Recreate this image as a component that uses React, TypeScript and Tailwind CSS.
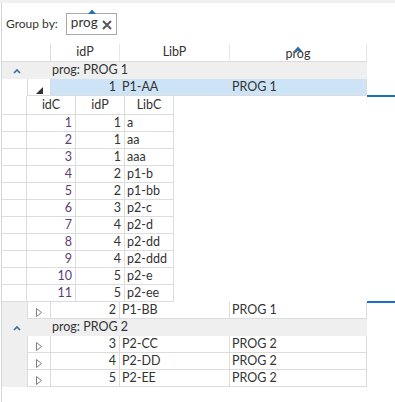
import React from "react";

const parents1 = [
  { id: 1, lib: "P1-AA", prog: "PROG 1", open: true },
  { id: 2, lib: "P1-BB", prog: "PROG 1", open: false },
];
const parents2 = [
  { id: 3, lib: "P2-CC", prog: "PROG 2" },
  { id: 4, lib: "P2-DD", prog: "PROG 2" },
  { id: 5, lib: "P2-EE", prog: "PROG 2" },
];
const children: [number, number, string][] = [
  [1, 1, "a"],
  [2, 1, "aa"],
  [3, 1, "aaa"],
  [4, 2, "p1-b"],
  [5, 2, "p1-bb"],
  [6, 3, "p2-c"],
  [7, 4, "p2-d"],
  [8, 4, "p2-dd"],
  [9, 4, "p2-ddd"],
  [10, 5, "p2-e"],
  [11, 5, "p2-ee"],
];

function SortUp({ className }: { className?: string }) {
  return (
    <svg width="8" height="5" viewBox="0 0 8 5" className={className}>
      <polygon points="0,5 4,0.5 8,5" fill="#2d6db4" />
    </svg>
  );
}

function Chevron() {
  return (
    <svg width="8" height="6" viewBox="0 0 8 6">
      <polyline points="1,5 4,2 7,5" fill="none" stroke="#3c6ea8" strokeWidth="1.7" />
    </svg>
  );
}

function CollapsedArrow() {
  return (
    <svg width="6" height="9" viewBox="0 0 6 9">
      <polygon points="0.5,0.5 5.5,4.5 0.5,8.5" fill="white" stroke="#808080" strokeWidth="1" />
    </svg>
  );
}

function ExpandedArrow() {
  return (
    <svg width="7" height="7" viewBox="0 0 7 7">
      <polygon points="7,0 7,7 0,7" fill="#333" />
    </svg>
  );
}

function GroupRow({ label }: { label: string }) {
  return (
    <div className="flex h-[17px] w-[365px] items-center bg-[#efefef]">
      <div className="flex w-[25px] justify-center pl-[4px] pt-[1px]">
        <Chevron />
      </div>
      <div className="pl-[25px] leading-none">{label}</div>
    </div>
  );
}

function ParentRow({
  id,
  lib,
  prog,
  selected,
}: {
  id: number;
  lib: string;
  prog: string;
  selected?: boolean;
}) {
  return (
    <div className="flex h-[17px]">
      <div className={`w-[25px] ${selected ? "bg-white" : "bg-[#efefef]"}`} />
      <div className="flex w-[24px] items-end justify-center border-x border-b border-[#dcdcdc] pb-[1px]">
        {selected ? <ExpandedArrow /> : <CollapsedArrow />}
      </div>
      <div
        className={`flex w-[69px] items-center justify-end border-r border-b border-[#dcdcdc] pr-[3px] ${
          selected ? "bg-[#cde4f7] border-r-[#cde4f7]" : ""
        }`}
      >
        {id}
      </div>
      <div
        className={`flex w-[110px] items-center border-r border-b border-[#dcdcdc] pl-[2px] ${
          selected ? "bg-[#cde4f7] border-r-[#cde4f7]" : ""
        }`}
      >
        {lib}
      </div>
      <div
        className={`flex w-[137px] items-center border-r border-b border-[#dcdcdc] pl-[2px] ${
          selected ? "bg-[#cde4f7]" : ""
        }`}
      >
        {prog}
      </div>
      {selected && (
        <div className="flex flex-1 items-end">
          <div className="h-[2px] w-full translate-y-px bg-[#1b6fc4]" />
        </div>
      )}
    </div>
  );
}

function Detail() {
  return (
    <div className="flex">
      <div className="w-[172px] border-r border-[#dcdcdc]">
        <div className="flex h-[19px] border-b border-[#dcdcdc]">
          <div className="w-[25px] border-r border-[#dcdcdc]" />
          <div className="flex w-[49px] items-center justify-center border-r border-[#dcdcdc]">idC</div>
          <div className="flex w-[49px] items-center justify-center border-r border-[#dcdcdc]">idP</div>
          <div className="flex w-[48px] items-center justify-center">LibC</div>
        </div>
        {children.map(([c, p, l]) => (
          <div key={c} className="flex h-[17px] border-b border-[#dcdcdc]">
            <div className="w-[25px] border-r border-[#dcdcdc]" />
            <div className="flex w-[49px] items-center justify-end border-r border-[#dcdcdc] pr-[3px] text-[#5b3b78]">
              {c}
            </div>
            <div className="flex w-[49px] items-center justify-end border-r border-[#dcdcdc] pr-[3px]">{p}</div>
            <div className="flex w-[48px] items-center pl-[2px]">{l}</div>
          </div>
        ))}
      </div>
      <div className="w-[193px]" />
      <div className="flex flex-1 items-end">
        <div className="h-[2px] w-full translate-y-px bg-[#1b6fc4]" />
      </div>
    </div>
  );
}

export default function App() {
  return (
    <div className="h-[402px] w-[395px] overflow-hidden bg-white font-['Segoe_UI',Lato,sans-serif] text-[12.5px] text-[#333]">
      <div className="h-[3px] bg-[#f0f0f0]" />
      <div className="ml-px h-[399px] border-l border-[#d6d6d6]">
        {/* group-by panel */}
        <div className="flex h-[41px] items-center pl-[4px]">
          <span className="mt-[1px] text-[12px]">Group by:</span>
          <div className="ml-[8px] flex h-[22px] w-[51px] items-center border border-[#a9a9a9] pl-[4px]">
            <div className="relative">
              <SortUp className="absolute left-[17px] -top-[5px]" />
              <span className="text-[13.5px] leading-none">prog</span>
            </div>
            <svg width="10" height="10" viewBox="0 0 10 10" className="ml-[4px] mt-[2px]">
              <path d="M1 1 L9 9 M9 1 L1 9" stroke="#5a5a5a" strokeWidth="2" />
            </svg>
          </div>
        </div>

        {/* header */}
        <div className="flex h-[18px] w-[365px] border-b border-[#dcdcdc]">
          <div className="w-[49px] border-r border-[#dcdcdc]" />
          <div className="flex w-[69px] items-center justify-center border-r border-[#e6e6e6]">idP</div>
          <div className="flex w-[110px] items-center justify-center border-r border-[#e6e6e6]">LibP</div>
          <div className="relative flex w-[137px] items-end justify-center border-r border-[#e6e6e6] pb-[1px]">
            <SortUp className="absolute top-[2px] left-[64px]" />
            <span className="leading-none">prog</span>
          </div>
        </div>

        <GroupRow label="prog: PROG 1" />
        <ParentRow {...parents1[0]} selected />
        <Detail />
        <ParentRow {...parents1[1]} />
        <GroupRow label="prog: PROG 2" />
        {parents2.map((p) => (
          <ParentRow key={p.id} {...p} />
        ))}
      </div>
    </div>
  );
}
